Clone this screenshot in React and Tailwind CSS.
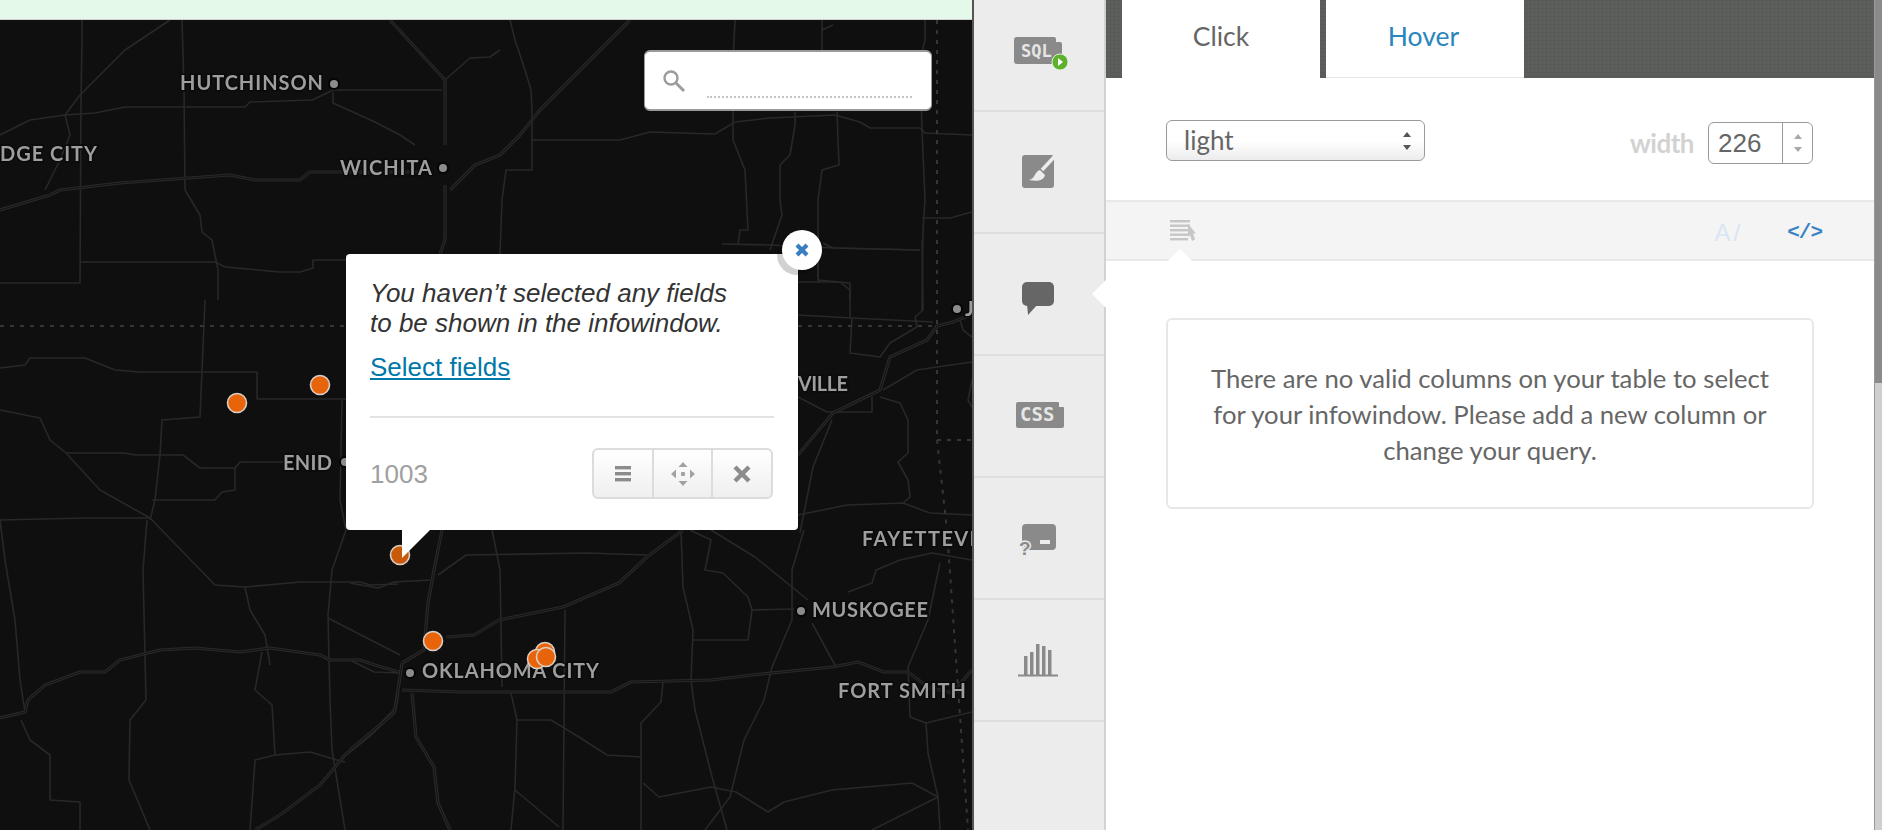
const roads = [
  'M82 20L82 40L81 100L80 283L0 283',
  'M80 262L215 262L225 267L280 272L300 272L313 268L313 260L346 260',
  'M170 20L125 50L80 95L65 115L30 120L0 135',
  'M65 115L95 113L125 107L245 107L250 102L312 100L325 94L333 90L442 90',
  'M182 20L184 90L185 190L200 215L202 232L212 240L218 270L218 300',
  'M65 115L70 135L60 160L45 190',
  'M333 92L333 103L375 122L400 135L415 145',
  'M445 80L470 58L490 57L500 50',
  'M510 20L515 40L525 70L531 90L532 110L532 170L506 170L502 200L500 254',
  'M532 140L620 140L650 132L715 134L735 122L770 118L835 115L860 122L870 128L920 128L925 133L972 135',
  'M735 20L733 60L733 140L745 170L748 230L740 230L738 245',
  'M822 20L822 30L833 25M822 30L822 50',
  'M795 112L795 125L790 155L780 165L780 200L782 215L770 250',
  'M837 112L839 165L822 170L818 200L818 280L850 283L850 300',
  'M925 20L925 40L920 60L922 130L925 200L923 230L922 310',
  'M922 218L950 218L972 212',
  'M722 244L770 245L835 248L920 250',
  'M0 368L25 365L30 358L85 358L115 370L140 372L250 372L257 372L257 399L346 399',
  'M205 300L200 417L162 420L160 455L155 500L150 520',
  'M0 410L40 418L50 440L66 453L125 453L135 455L183 455L200 468L235 468L240 462L283 462',
  'M235 468L235 490L222 492L215 500L152 500',
  'M66 453L100 490L150 518',
  'M0 520L85 518L150 518L215 585L245 587L250 610L265 635L270 665',
  'M147 520L143 570L146 700L130 720L129 780L150 830',
  'M245 587L300 582L360 582L370 585L398 584',
  'M342 400L340 500L346 530M346 530L332 570L328 615L330 700L332 750L345 830',
  'M328 618L400 655',
  'M262 652L255 690L272 705L275 755L310 752L337 760L345 762',
  'M275 755L255 760L250 830',
  'M0 520L5 560L15 620L20 680L25 712',
  'M21 720L30 740L50 755L50 800L80 802L80 830',
  'M350 660L374 672L402 673',
  'M438 575L466 555L587 553L647 555',
  'M350 583L378 588L394 582L430 580',
  'M492 530L500 570L502 687',
  'M565 610L563 830',
  'M511 693L517 720L551 720L579 737L607 755L641 757L641 830',
  'M517 720L515 787L511 830M515 790L559 827',
  'M663 683L661 702L641 723L641 757',
  'M681 530L683 587L693 630L691 680L695 710L711 773L727 830',
  'M690 530L711 540L705 570L723 573L748 597L752 610L748 640L693 640',
  'M711 530L755 557L808 600',
  'M752 610L794 609',
  'M804 530L792 570L792 620L772 667L764 700L744 740L730 797L705 830',
  'M643 783L659 797L711 787L736 792L768 812L784 802L832 790L912 783L938 797L872 830',
  'M812 623L836 667',
  'M848 592L872 583L876 570L900 560L932 553L972 560',
  'M940 563L928 620L908 667L910 717L926 723L972 712M926 723L928 753L938 797L940 830',
  'M883 390L917 370L937 367L972 362',
  'M890 343L880 357L850 353L852 318L798 315',
  'M850 318L850 290L840 282L798 282M818 282L818 254',
  'M852 318L933 322',
  'M922 240L923 310L915 317L917 327L890 343',
  'M823 243L833 248L920 250',
  'M880 397L900 403L908 420L908 453L898 462L908 480L910 497L903 503',
  'M798 515L847 505L903 503L930 513L972 515',
  'M832 420L813 467L800 533',
  'M798 397L827 412L872 412L872 397',
  'M960 320L963 330L972 337',
  'M972 380L968 400L972 407',
]

const highways = [
  'M0 210L50 195L60 190L120 183L230 175L255 180L300 180L310 172L420 172',
  'M445 185L445 240L440 254',
  'M390 20L445 80L445 145',
  'M450 190L475 165L500 155L520 135L540 110L590 60L630 20',
  'M0 718L25 712L28 700L45 685L80 672L105 672L120 660L160 650L195 648L240 652L270 648L320 655L330 660L360 660L375 665L402 673',
  'M255 830L280 815L320 785L345 755L370 735L395 710L398 690L402 663',
  'M442 530L434 570L428 603L424 650L402 663',
  'M412 693L416 737L434 767L438 803L450 830',
  'M398 693L394 713L350 750',
  'M402 690L462 692L611 692L631 682L711 680L752 675L832 667L858 662L884 672L908 672L928 687L952 693L972 670',
  'M446 637L474 635L499 620L563 607L619 583L647 557L683 530',
  'M798 455L833 413L880 390L890 357L927 340L937 326L953 322L970 315',
]

const dotted = [
  'M0 326L346 326M798 326L937 326',
  'M937 20L937 440L947 530L968 830',
  'M937 440L972 440',
]

const labels = [
  { text: 'HUTCHINSON', x: 180, y: 90, len: 143 },
  { text: 'DGE CITY', x: 0, y: 161, len: 97 },
  { text: 'WICHITA', x: 340, y: 175, len: 92 },
  { text: 'ENID', x: 283, y: 470, len: 49 },
  { text: 'VILLE', x: 798, y: 391, len: 50 },
  { text: 'FAYETTEVILLE', x: 862, y: 546, len: 150 },
  { text: 'MUSKOGEE', x: 812, y: 617, len: 116 },
  { text: 'OKLAHOMA CITY', x: 422, y: 678, len: 177 },
  { text: 'FORT SMITH', x: 838, y: 698, len: 128 },
  { text: 'J', x: 965, y: 316, len: 8 },
]

const cityDots = [[334, 84], [443, 168], [345, 462], [957, 309], [801, 611], [410, 673]]

const pins = [
  { x: 237, y: 403, fill: '#e8640a' },
  { x: 320, y: 385, fill: '#e8640a' },
  { x: 400, y: 555, fill: '#c85a0a' },
  { x: 433, y: 641, fill: '#e8640a' },
  { x: 545, y: 652, fill: '#e8640a' },
  { x: 537, y: 659, fill: '#e8640a' },
  { x: 546, y: 657, fill: '#e8640a' },
]

const MapDrawing = () => (
  <svg className="absolute left-0 top-0 blur-[0.4px]" width="972" height="830" viewBox="0 0 972 830" fill="none">
    {roads.map((d, i) => <path key={i} d={d} stroke="#282828" strokeWidth="1.6" strokeLinejoin="round" />)}
    {highways.map((d, i) => (
      <g key={i}>
        <path d={d} stroke="#2a2a2a" strokeWidth="3.2" strokeLinejoin="round" />
        <path d={d} stroke="#151515" strokeWidth="1.1" strokeLinejoin="round" />
      </g>
    ))}
    {dotted.map((d, i) => <path key={i} d={d} stroke="#363636" strokeWidth="2" strokeDasharray="4 6" />)}
    {cityDots.map(([x, y]) => (
      <circle key={x} cx={x} cy={y} r="4" fill="#8c8c8c" stroke="#050505" strokeWidth="4" paintOrder="stroke" />
    ))}
    {labels.map((l) => (
      <text
        key={l.text}
        x={l.x}
        y={l.y}
        textLength={l.len}
        fill="#9e9e9e"
        stroke="#0a0a0a"
        strokeWidth="3"
        paintOrder="stroke"
        className="font-['Lato',sans-serif] text-[20px] font-bold"
      >
        {l.text}
      </text>
    ))}
    {pins.map((p) => <circle key={p.x + '-' + p.y} cx={p.x} cy={p.y} r="9.5" fill={p.fill} stroke="#dccfc5" strokeWidth="1.6" />)}
  </svg>
)

const SearchBox = () => (
  <div className="absolute left-[644px] top-[50px] flex h-[61px] w-[288px] items-start rounded-[6px] border-y-2 border-x border-[#9a9a9a] bg-white pl-[17px] pr-[19px]">
    <svg className="mt-[17px]" width="24" height="24" viewBox="0 0 24 24" fill="none" stroke="#9c9c9c">
      <circle cx="9" cy="9" r="6.5" strokeWidth="2.4" />
      <path d="M14 14l8 8" strokeWidth="3" />
    </svg>
    <div className="ml-[21px] mt-[44px] flex-1 border-b-2 border-dotted border-[#c4c4c4]" />
  </div>
)

const Popup = () => (
  <div className="absolute left-[346px] top-[254px] h-[276px] w-[452px] rounded-[4px] bg-white px-[24px] pt-[25px] font-['Liberation_Sans',Arial,sans-serif]">
    <p className="text-[26px] italic leading-[29.5px] text-[#333]">
      You haven’t selected any fields<br />to be shown in the infowindow.
    </p>
    <a href="#" className="mt-[14px] block text-[26px] leading-[30px] text-[#0078a8] underline">Select fields</a>
    <div className="mt-[34px] h-[2px] bg-[#e3e3e3]" />
    <div className="mt-[30px] flex items-center justify-between">
      <span className="pt-[2px] text-[26px] text-[#a0a0a0]">1003</span>
      <div className="mr-[1px] flex h-[51px] w-[181px] rounded-[6px] border-2 border-[#dcdcdc] bg-gradient-to-b from-white to-[#efefef]">
        <button className="flex flex-1 items-center justify-center">
          <svg width="18" height="16" viewBox="0 0 18 16" fill="#8c8c8c">
            <rect x="1" y="0" width="16" height="3.4" />
            <rect x="1" y="6" width="16" height="3.4" />
            <rect x="1" y="12" width="16" height="3.4" />
          </svg>
        </button>
        <button className="flex flex-1 items-center justify-center border-x-2 border-[#dcdcdc]">
          <svg width="26" height="26" viewBox="0 0 26 26" fill="#a2a2a2">
            <path d="M13 1l4.500 5h-9zM13 25l-4.500-5h9zM1 13l5-4.500v9zM25 13l-5 4.500v-9z" />
            <rect x="11" y="11" width="4" height="4" rx="1" />
          </svg>
        </button>
        <button className="flex flex-1 items-center justify-center">
          <svg width="18" height="18" viewBox="0 0 18 18" stroke="#8c8c8c" strokeWidth="4.4">
            <path d="M2 2l14 14M16 2L2 16" />
          </svg>
        </button>
      </div>
    </div>
    <svg className="absolute left-[56px] top-full" width="28" height="28" viewBox="0 0 28 28" fill="#fff">
      <polygon points="0,0 28,0 0,28" />
    </svg>
    <button className="absolute left-[436px] top-[-24px] flex h-[40px] w-[40px] items-center justify-center rounded-full bg-white shadow-[-5px_5px_0_rgba(0,0,0,0.18)]">
      <svg width="14" height="14" viewBox="0 0 14 14" stroke="#3a7dc0" strokeWidth="4.2">
        <path d="M2 2l10 10M12 2L2 12" />
      </svg>
    </button>
  </div>
)

const SqlIcon = () => (
  <svg width="60" height="50" viewBox="0 0 60 50">
    <path d="M8 7h37a2 2 0 0 1 2 2v3h4a2 2 0 0 1 2 2v17a3 3 0 0 1-3 3H8a3 3 0 0 1-3-3V10a3 3 0 0 1 3-3z" fill="#8a8a8a" />
    <text x="12" y="27" fill="#e6e6e6" className="font-['DejaVu_Sans_Mono',monospace] text-[17px] font-bold">SQL</text>
    <circle cx="51" cy="32" r="8" fill="#5db12c" stroke="#e2efdc" strokeWidth="1" />
    <path d="M49 28l5 4-5 4z" fill="#fff" />
  </svg>
)

const BrushIcon = () => (
  <svg width="60" height="50" viewBox="0 0 60 50">
    <rect x="13" y="8" width="32" height="33" rx="3" fill="#8a8a8a" />
    <path d="M46 9L33 23" stroke="#ececec" strokeWidth="3.5" />
    <path d="M20 33c6-1 6-9 11-10l5 5c-1 5-7 7-16 5z" fill="#ececec" />
  </svg>
)

const CommentIcon = () => (
  <svg width="60" height="50" viewBox="0 0 60 50" fill="#666">
    <rect x="13" y="13" width="32" height="24" rx="5" />
    <polygon points="18,35 19,46 29,35" />
  </svg>
)

const CssIcon = () => (
  <svg width="60" height="50" viewBox="0 0 60 50">
    <path d="M9 11h40a1 1 0 0 1 1 1v4h4a1 1 0 0 1 1 1v18a2 2 0 0 1-2 2H9a2 2 0 0 1-2-2V13a2 2 0 0 1 2-2z" fill="#8a8a8a" />
    <text x="11" y="30" fill="#e6e6e6" className="font-['DejaVu_Sans_Mono',monospace] text-[19px] font-bold">CSS</text>
  </svg>
)

const TooltipIcon = () => (
  <svg width="60" height="50" viewBox="0 0 60 50">
    <rect x="13" y="11" width="34" height="26" rx="4" fill="#8a8a8a" />
    <rect x="31" y="27" width="10" height="4" fill="#ececec" />
    <text x="10" y="42" fill="#8a8a8a" stroke="#ececec" strokeWidth="3" paintOrder="stroke" className="font-['Liberation_Sans',sans-serif] text-[19px] font-bold">?</text>
  </svg>
)

const ChartIcon = () => (
  <svg width="60" height="50" viewBox="0 0 60 50" fill="#8a8a8a">
    <rect x="15" y="21" width="3.500" height="19" />
    <rect x="21" y="17" width="3.500" height="23" />
    <rect x="27" y="9" width="3.500" height="31" />
    <rect x="33" y="11" width="3.500" height="29" />
    <rect x="39" y="15" width="3.500" height="25" />
    <rect x="9" y="39.500" width="40" height="2" />
  </svg>
)

const sideIcons = [SqlIcon, BrushIcon, CommentIcon, CssIcon, TooltipIcon, ChartIcon]

const Sidebar = () => (
  <div className="relative w-[134px] shrink-0 border-l-2 border-r-2 border-l-[#555] border-r-[#d2d2d2] bg-[#ececec]">
    {sideIcons.map((Icon, i) => (
      <div key={i} className={`flex items-center justify-center border-b-2 border-[#dedede] ${i === 0 ? 'h-[112px]' : 'h-[122px]'}`}>
        <Icon />
      </div>
    ))}
    <svg className="absolute right-[-2px] top-[280px]" width="14" height="28" viewBox="0 0 14 28" fill="#fff">
      <polygon points="14,0 0,14 14,28" />
    </svg>
  </div>
)

const ToolbarIcon = () => (
  <svg width="28" height="22" viewBox="0 0 28 22" fill="#c6c6c6">
    <rect x="0" y="0" width="20" height="2.400" />
    <rect x="0" y="4.500" width="20" height="2.400" />
    <rect x="0" y="9" width="18" height="2.400" />
    <rect x="0" y="13.500" width="18" height="2.400" />
    <rect x="0" y="18" width="18" height="2.400" />
    <path d="M18 4l8 9.500-3 0 2 6-3 1.500-2-6-2 2z" />
  </svg>
)

const Panel = () => (
  <div className="flex min-w-0 flex-1 flex-col font-['Lato',sans-serif]">
    <div className="flex h-[78px] shrink-0 gap-[6px] bg-[#5d5f5d] bg-[linear-gradient(#585a58_1px,transparent_1px),linear-gradient(90deg,#585a58_1px,transparent_1px)] bg-[size:4px_4px] pl-[16px]">
      <button className="h-full w-[198px] bg-white pb-[5px] text-[26.5px] text-[#666]">Click</button>
      <button className="h-full w-[198px] border-b border-[#e5e5e5] bg-white pb-[4px] pr-[3px] text-[26.5px] text-[#2a86bc]">Hover</button>
    </div>
    <div className="flex h-[122px] shrink-0 items-start justify-between pl-[60px] pr-[61px]">
      <div className="relative mt-[42px]">
        <select
          defaultValue="light"
          className="block h-[41px] w-[259px] appearance-none rounded-[6px] border-[1.5px] border-[#9a9a9a] bg-gradient-to-b from-white via-white to-[#ececec] pl-[17px] text-[26px] text-[#666] outline-none"
        >
          <option value="light">light</option>
          <option value="dark">dark</option>
        </select>
        <svg className="absolute right-[13px] top-[12px]" width="10" height="18" viewBox="0 0 10 18" fill="#555">
          <path d="M5 0l4 5H1zM5 18l-4-5h8z" />
        </svg>
      </div>
      <div className="mt-[44px] flex items-center">
        <span className="mr-[14px] text-[26px] font-bold tracking-[-0.5px] text-[#d2d2d2]">width</span>
        <div className="flex h-[42px] w-[105px] rounded-[6px] border-[1.5px] border-[#9a9a9a]">
          <input
            readOnly
            value="226"
            className="w-[74px] border-r-[1.5px] border-[#9a9a9a] pl-[9px] font-['Liberation_Sans',sans-serif] text-[26px] text-[#666] outline-none"
          />
          <div className="flex flex-1 items-center justify-center">
            <svg width="10" height="20" viewBox="0 0 10 20" fill="#a8a8a8">
              <path d="M5 1l4 5H1zM5 19l-4-5h8z" />
            </svg>
          </div>
        </div>
      </div>
    </div>
    <div className="relative flex h-[61px] shrink-0 items-center justify-between border-y-2 border-[#e9e9e9] bg-[#f4f4f4] pl-[64px] pr-[52px]">
      <ToolbarIcon />
      <div className="flex items-center gap-[44px] pt-[4px]">
        <span className="font-['Liberation_Sans',sans-serif] text-[24px] leading-none tracking-[3px] text-[#d8e6f3]">A/</span>
        <span className="font-['Liberation_Mono',monospace] text-[21px] font-bold leading-none tracking-[-1px] text-[#3b82c4]">&lt;/&gt;</span>
      </div>
      <svg className="absolute bottom-[-2px] left-[62px]" width="24" height="12" viewBox="0 0 24 12" fill="#fff">
        <polygon points="0,12 12,0 24,12" />
      </svg>
    </div>
    <div className="pl-[60px] pt-[57px]">
      <div className="flex h-[191px] w-[648px] items-center justify-center rounded-[6px] border-2 border-[#e8e8e8] px-[34px] text-center text-[25.7px] leading-[36px] text-[#666]">
        <p>There are no valid columns on your table to select for your infowindow. Please add a new column or change your query.</p>
      </div>
    </div>
  </div>
)

const App = () => {
  return (
    <div className="flex h-[830px] w-[1882px] overflow-hidden bg-white">
      <div className="relative w-[972px] shrink-0 overflow-hidden bg-[#0f0f0f]">
        <MapDrawing />
        <div className="relative h-[20px] border-b border-[#cfcfcf] bg-[#e4f9ea]" />
        <SearchBox />
        <Popup />
      </div>
      <Sidebar />
      <Panel />
      <div className="flex w-[8px] shrink-0 flex-col border-l border-[#999]">
        <div className="h-[383px] bg-[#8a8a8a]" />
        <div className="flex-1 bg-[#cfcfcf]" />
      </div>
    </div>
  )
}

export default App
